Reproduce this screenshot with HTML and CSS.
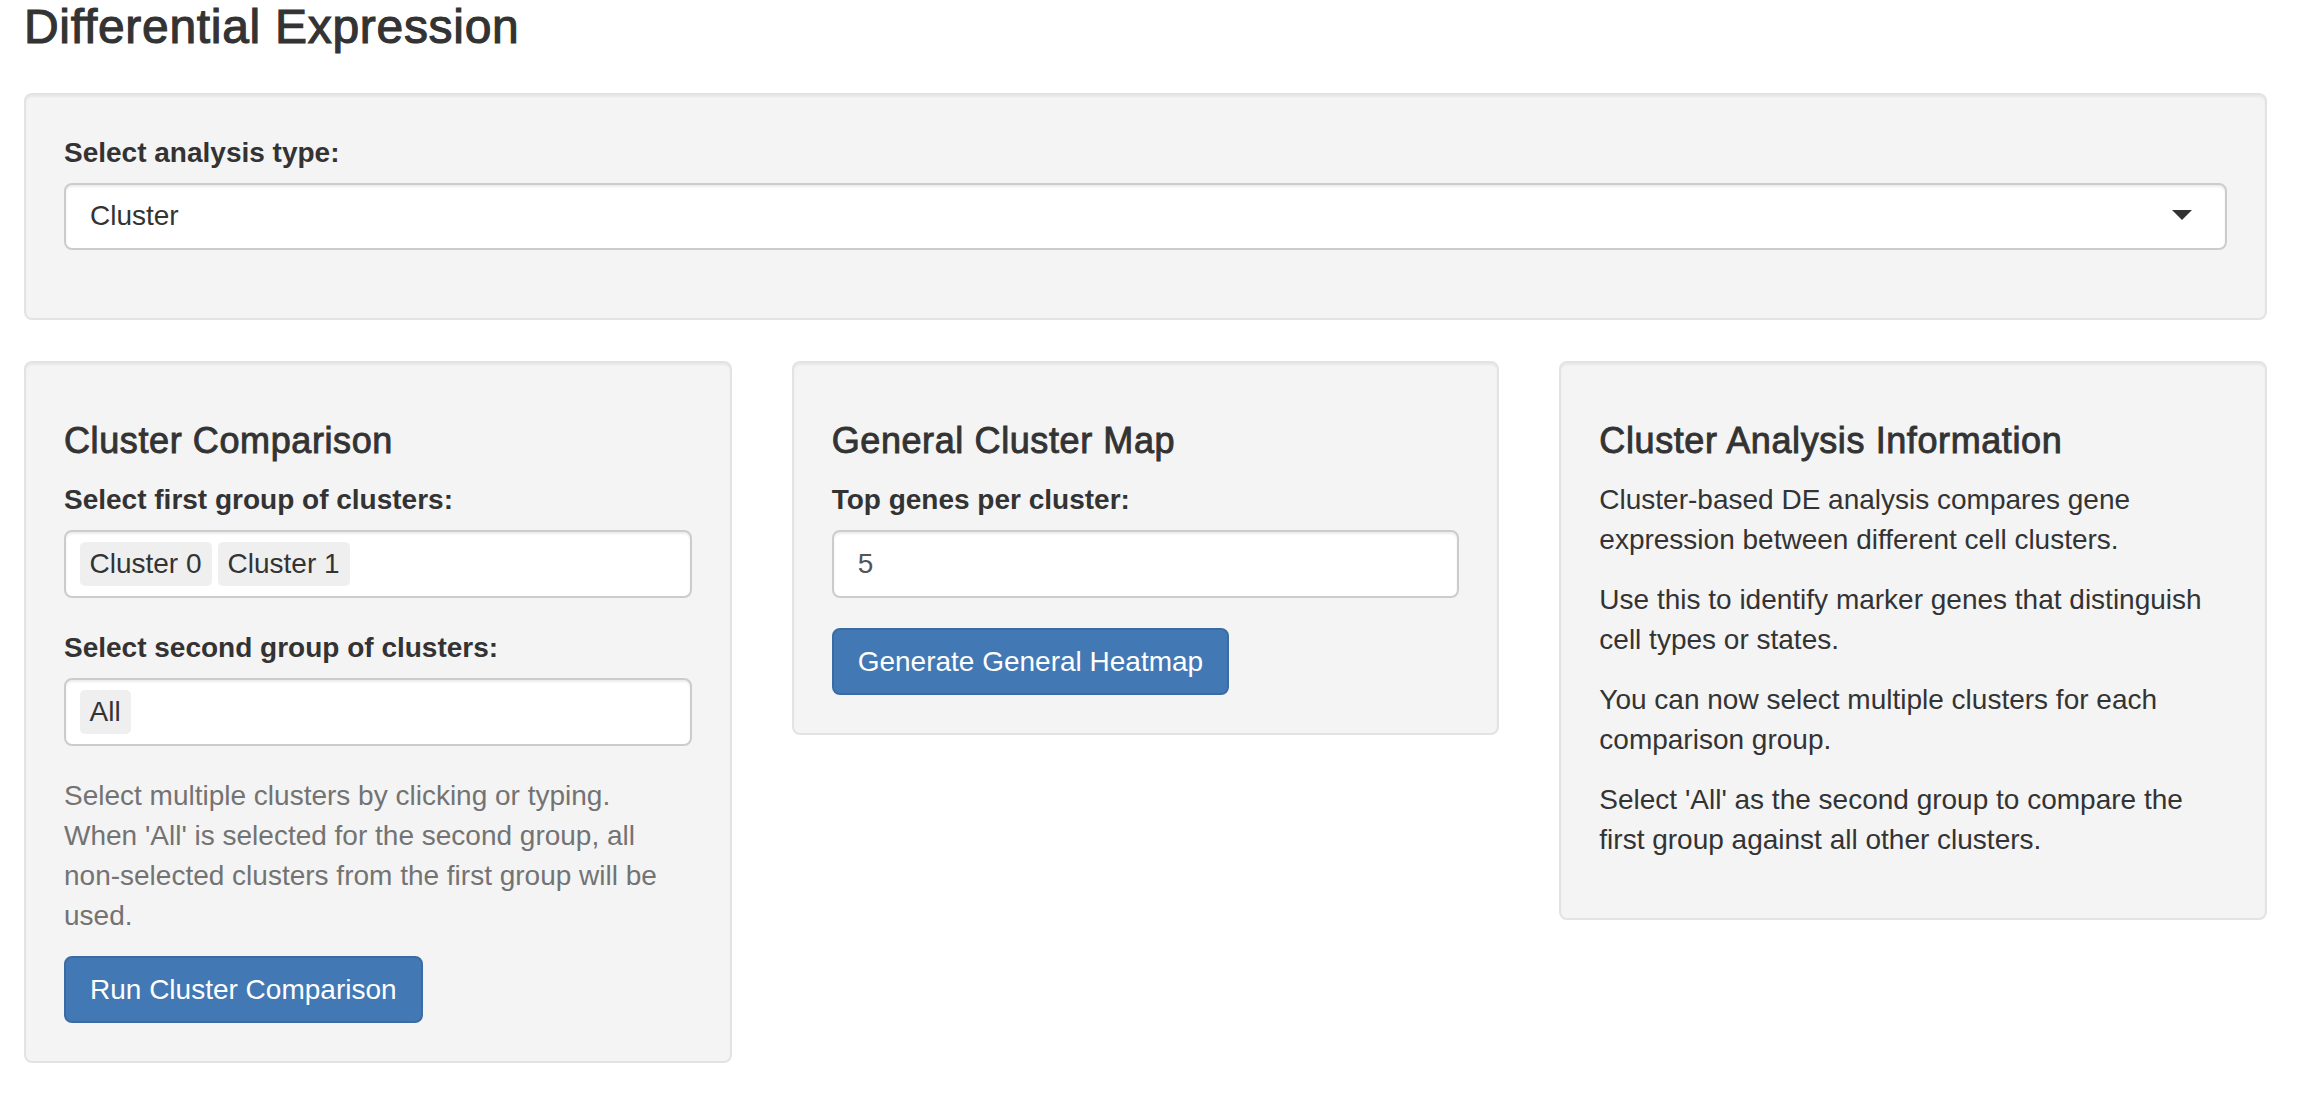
FILE: index.html
```html
<!DOCTYPE html>
<html lang="en">
<head>
<meta charset="utf-8">
<title>Differential Expression</title>
<link rel="stylesheet" href="styles.css">
</head>
<body>
<div class="page">
  <h3 class="page-title">Differential Expression</h3>

  <div class="well well-top">
    <div class="form-group">
      <label class="control-label">Select analysis type:</label>
      <div class="selectize single">
        <span class="item-text">Cluster</span>
        <span class="caret"></span>
      </div>
    </div>
  </div>

  <div class="row">
    <div class="well panel">
      <h4 class="panel-title">Cluster Comparison</h4>
      <div class="form-group">
        <label class="control-label">Select first group of clusters:</label>
        <div class="selectize multi">
          <span class="tag">Cluster 0</span>
          <span class="tag">Cluster 1</span>
        </div>
      </div>
      <div class="form-group">
        <label class="control-label">Select second group of clusters:</label>
        <div class="selectize multi">
          <span class="tag">All</span>
        </div>
      </div>
      <p class="help-text">Select multiple clusters by clicking or typing.<br>When 'All' is selected for the second group, all non-selected clusters from the first group will be used.</p>
      <button class="btn btn-primary" type="button">Run Cluster Comparison</button>
    </div>

    <div class="well panel">
      <h4 class="panel-title">General Cluster Map</h4>
      <div class="form-group">
        <label class="control-label">Top genes per cluster:</label>
        <input class="form-control" type="text" value="5">
      </div>
      <button class="btn btn-primary" type="button">Generate General Heatmap</button>
    </div>

    <div class="well panel">
      <h4 class="panel-title">Cluster Analysis Information</h4>
      <p class="info-text">Cluster-based DE analysis compares gene expression between different cell clusters.</p>
      <p class="info-text">Use this to identify marker genes that distinguish cell types or states.</p>
      <p class="info-text">You can now select multiple clusters for each comparison group.</p>
      <p class="info-text">Select 'All' as the second group to compare the first group against all other clusters.</p>
    </div>
  </div>
</div>
</body>
</html>
```

FILE: styles.css
```css
* {
  box-sizing: border-box;
}

html,
body {
  margin: 0;
  background: #ffffff;
}

body {
  font-family: "Liberation Sans", Arial, Helvetica, sans-serif;
  font-size: 28px;
  line-height: 40px;
  color: #333333;
}

.page {
  padding: 1px 31px 0 24px;
}

.page-title {
  margin: 0 0 39px;
  font-size: 48px;
  line-height: 52.8px;
  font-weight: 400;
  letter-spacing: 0.7px;
  -webkit-text-stroke: 1.1px #333333;
  color: #333333;
}

.well {
  background: #f4f4f4;
  border: 2px solid #e3e3e3;
  border-radius: 8px;
  box-shadow: inset 0 2px 2px rgba(0, 0, 0, 0.05);
  padding: 38px;
}

.well-top {
  margin-bottom: 41px;
}

.row {
  display: grid;
  grid-template-columns: repeat(3, 1fr);
  column-gap: 60px;
  align-items: start;
}

.panel-title {
  margin: 20px 0 20px;
  font-size: 36px;
  line-height: 39.6px;
  font-weight: 400;
  letter-spacing: 0.6px;
  -webkit-text-stroke: 0.9px #333333;
  color: #333333;
}

.form-group {
  margin-bottom: 30px;
}

.control-label {
  display: block;
  font-weight: 700;
  margin-bottom: 10px;
}

.selectize {
  position: relative;
  display: flex;
  align-items: center;
  height: 68px;
  padding: 0 24px;
  background: #ffffff;
  border: 2px solid #cccccc;
  border-radius: 8px;
  box-shadow: inset 0 2px 2px rgba(0, 0, 0, 0.075);
  color: #333333;
}

.selectize.single {
  height: 67px;
}

.selectize.multi {
  padding-left: 13.5px;
}

.caret {
  position: absolute;
  right: 33px;
  top: 50%;
  margin-top: -6px;
  width: 0;
  height: 0;
  border-style: solid;
  border-width: 10px 10px 0;
  border-color: #333333 transparent transparent;
}

.tag {
  display: inline-block;
  height: 44px;
  padding: 2px 10px;
  margin-right: 6px;
  line-height: 40px;
  background: #efefef;
  border-radius: 5px;
  color: #333333;
}

.form-control {
  display: block;
  width: 100%;
  height: 68px;
  padding: 12px 24px;
  font: inherit;
  line-height: 40px;
  color: #555555;
  background: #ffffff;
  border: 2px solid #cccccc;
  border-radius: 8px;
  box-shadow: inset 0 2px 2px rgba(0, 0, 0, 0.075);
  outline: none;
}

.help-text {
  margin: 0 0 20px;
  color: #737373;
}

.info-text {
  margin: 0 0 20px;
}

.btn {
  display: inline-block;
  padding: 11.5px 24px;
  font: inherit;
  line-height: 40px;
  border-radius: 8px;
  cursor: pointer;
}

.btn-primary {
  background: #4278b3;
  border: 2px solid #3a6ca3;
  color: #ffffff;
}
```
